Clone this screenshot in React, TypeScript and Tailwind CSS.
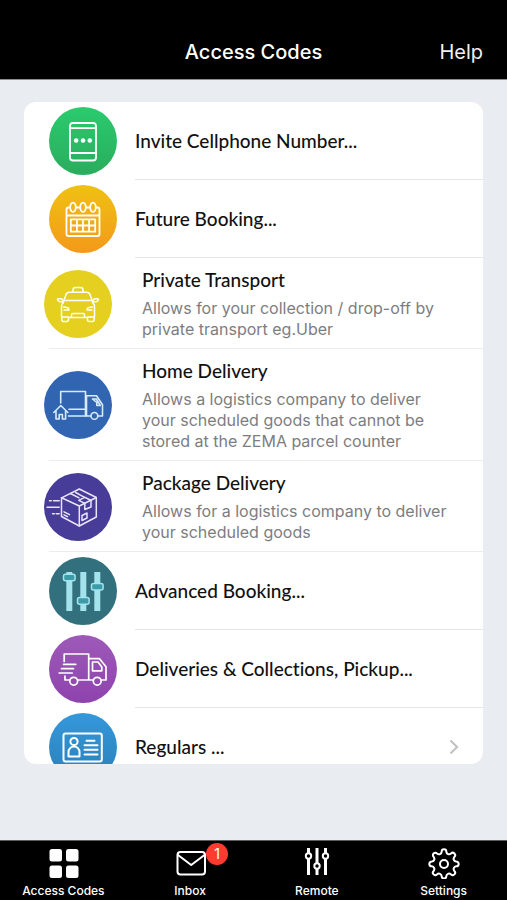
import { ReactNode } from 'react'

//icons
const PhoneIcon = () => (
  <>
    <rect x="21" y="16" width="26" height="37.5" rx="3" />
    <path d="M21 21.2h26M21 46h26" />
    <g fill="#fff" stroke="none">
      <circle cx="27.2" cy="33.5" r="2.3" />
      <circle cx="34" cy="33.5" r="2.3" />
      <circle cx="40.8" cy="33.5" r="2.3" />
    </g>
  </>
)

const CalendarIcon = () => (
  <>
    <path d="M21 22.5h-1.5a2 2 0 0 0-2 2V49a2 2 0 0 0 2 2h29a2 2 0 0 0 2-2V24.5a2 2 0 0 0-2-2H47M27 22.5h4M37 22.5h4M17.5 30.5h33" />
    <ellipse cx="24" cy="22.2" rx="2.8" ry="4.6" />
    <ellipse cx="34" cy="22.2" rx="2.8" ry="4.6" />
    <ellipse cx="44" cy="22.2" rx="2.8" ry="4.6" />
    <path d="M21.8 34.3h24.4v12.4H21.8zM27.9 34.3v12.4M34 34.3v12.4M40.1 34.3v12.4M21.8 40.5h24.4" />
  </>
)

const TaxiIcon = () => (
  <g strokeWidth="1.5">
    <path d="M29 22v-2a2.5 2.5 0 0 1 2.5-2.5h5A2.5 2.5 0 0 1 39 20v2" />
    <path d="M19 33l3-8.5a3.5 3.5 0 0 1 3.3-2.3h17.4a3.5 3.5 0 0 1 3.3 2.3L49 33M21.5 30.5h25" />
    <path d="M19.8 31.5l-2.3-2.8h-3a1 1 0 0 0-.6 1.8l1.6 1.2h3.3M48.2 31.5l2.3-2.8h3a1 1 0 0 1 .6 1.800l-1.600 1.200h-3.300" />
    <path d="M19 33a4 4 0 0 0-1.5 3.200V47h7M49 33a4 4 0 0 1 1.500 3.200V47h-7" />
    <path d="M19.500 37l3.500.6a2.500 2.500 0 0 1 2 2.400h-5M48.500 37l-3.500.6a2.500 2.500 0 0 0-2 2.400h5" />
    <path d="M17.800 47v3a1.500 1.500 0 0 0 1.500 1.500H23a1.500 1.500 0 0 0 1.500-1.500v-2.500h19V50a1.500 1.500 0 0 0 1.500 1.500h3.700a1.500 1.500 0 0 0 1.500-1.500v-3M27.500 47v-2.500a1 1 0 0 1 1-1h11a1 1 0 0 1 1 1V47" />
  </g>
)

const HomeTruckIcon = () => (
  <g strokeWidth="1.6" stroke="#d6ebff">
    <path d="M16.7 32V20.5h24.8v24.7M25 38.3h16M24.5 45h17" />
    <path d="M9.8 41.5l7-7 7 7M12 40v8h3.2v-4.5h3.2V48h3.2v-8" />
    <path d="M46.5 45h-4V24.8h10l6 9V45h-4.5" />
    <path d="M48.5 28h3.8l4 6.5h-3.5M48.5 28l4.3 3.5v3" />
    <circle cx="50.4" cy="44.9" r="3.4" />
  </g>
)

const PackageIcon = () => (
  <g strokeWidth="1.5" stroke="#e7e4fb">
    <path d="M35.3 16l17 8.5V44l-17 9-17.8-9.5V24.8z" />
    <path d="M17.5 24.8L35.3 33l17-8.5M35.3 33v20" />
    <path d="M26.5 20.5l8.5 4.3M40.8 30.3l-6-3 5.800-3 6.700 3.200M40.800 30.300v6.200L47 34v-6.500M40.600 24.300l-9-4.800" />
    <path d="M20 38.8l5.5 2.900M20 41.800l3.500 1.800M38 42.500l5-2.500v5l-5 2.500z" />
    <path d="M5.500 27.700h1.800M9.500 27.700h5.700M3 34.300h12.200M8.500 40.700h1.800M12.200 40.700h3" />
  </g>
)

const SlidersIcon = () => (
  <>
    <g fill="#a4e3ec" stroke="none">
      <path d="M17.3 15h6v39h-6zM31.3 15h6v39h-6zM45.3 15h6v39h-6z" />
    </g>
    <g fill="#3c9ba8" stroke="#a4e3ec" strokeWidth="1.5">
      <rect x="14.5" y="17.2" width="11.6" height="6.6" rx="2" />
      <rect x="28.5" y="40.6" width="11.6" height="6.6" rx="2" />
      <rect x="42.5" y="26.5" width="11.6" height="6.6" rx="2" />
    </g>
  </>
)

const TruckIcon = () => (
  <g strokeWidth="1.7">
    <path d="M15.2 26.5V19h24.500v26M14.500 29.300h12.300M12.500 33.700h12M10.200 38h13M16 41v4h4.300M29 45h14.500" />
    <path d="M40 23.7h10.5l6.5 8V45h-4.5" />
    <path d="M43.5 27H49l3.800 5v3.800h-9.300z" />
    <circle cx="24.7" cy="46.2" r="3.9" />
    <circle cx="48.2" cy="46.2" r="3.9" />
  </g>
)

const CardIcon = () => (
  <g strokeWidth="2">
    <rect x="14.5" y="20.5" width="38.3" height="28" rx="2" />
    <circle cx="25" cy="28.5" r="3.6" />
    <path d="M19.5 43.5V39a5.5 5.5 0 0 1 11 0v4.5z" />
    <path d="M37.5 27.7h8M35.5 32.2h13M35.5 36.8h13M35.5 41.5h13" />
  </g>
)

interface Booking {
  title: string
  text?: string
  color: string
  icon: ReactNode
  arrow?: boolean
}

const bookings: Booking[] = [
  {
    title: 'Invite Cellphone Number...',
    color: 'bg-linear-to-b from-[#2bcb6e] to-[#2aac5d]',
    icon: <PhoneIcon />,
  },
  {
    title: 'Future Booking...',
    color: 'bg-linear-to-b from-[#efc112] to-[#f3991a]',
    icon: <CalendarIcon />,
  },
  {
    title: 'Private Transport',
    text: 'Allows for your collection / drop-off by private transport eg.Uber',
    color: 'bg-[#e5cf1f]',
    icon: <TaxiIcon />,
  },
  {
    title: 'Home Delivery',
    text: 'Allows a logistics company to deliver your scheduled goods that cannot be stored at the ZEMA parcel counter',
    color: 'bg-[#3165b2]',
    icon: <HomeTruckIcon />,
  },
  {
    title: 'Package Delivery',
    text: 'Allows for a logistics company to deliver your scheduled goods',
    color: 'bg-[#473c97]',
    icon: <PackageIcon />,
  },
  {
    title: 'Advanced Booking...',
    color: 'bg-[#33707e]',
    icon: <SlidersIcon />,
  },
  {
    title: 'Deliveries & Collections, Pickup...',
    color: 'bg-linear-to-b from-[#9d59b8] to-[#8e43ad]',
    icon: <TruckIcon />,
  },
  {
    title: 'Regulars ...',
    color: 'bg-linear-to-b from-[#3498db] to-[#2a80b9]',
    icon: <CardIcon />,
    arrow: true,
  },
]

const tabs = [
  {
    name: 'Access Codes',
    icon: (
      <g fill="#fff" stroke="none">
        <rect x="2.5" y="2" width="12.5" height="12.5" rx="2.5" />
        <rect x="19" y="2" width="12.5" height="12.5" rx="2.5" />
        <rect x="2.5" y="18.5" width="12.5" height="12.5" rx="2.5" />
        <rect x="19" y="18.5" width="12.5" height="12.5" rx="2.5" />
      </g>
    ),
  },
  {
    name: 'Inbox',
    badge: 1,
    icon: (
      <>
        <rect x="3.5" y="5" width="27.5" height="22.5" rx="3" />
        <path d="M4 8l13.2 10L30.500 8" />
      </>
    ),
  },
  {
    name: 'Remote',
    icon: (
      <>
        <path strokeWidth="3" strokeLinecap="butt" d="M7.500 1v5M7.500 12v16M16 1v15M16 22v6M24.500 1v5M24.500 12v16" />
        <circle cx="7.5" cy="9" r="2.7" />
        <circle cx="16" cy="19" r="2.7" />
        <circle cx="24.5" cy="9" r="2.7" />
      </>
    ),
  },
  {
    name: 'Settings',
    icon: (
      <>
        <path d="M13.7 4.600a2.300 2.300 0 0 1 4.600 0c.2 2.500 2.800 3.600 4.700 1.900a2.350 2.350 0 0 1 3.400 3.400c-1.600 1.900-.6 4.500 1.900 4.700a2.300 2.300 0 0 1 0 4.700c-2.500.2-3.500 2.800-1.900 4.700a2.350 2.350 0 0 1-3.400 3.400c-1.900-1.600-4.500-.6-4.700 1.900a2.300 2.300 0 0 1-4.600 0c-.2-2.500-2.800-3.500-4.700-1.900a2.350 2.350 0 0 1-3.400-3.400c1.600-1.900.6-4.500-1.900-4.700a2.300 2.300 0 0 1 0-4.700c2.500-.2 3.500-2.800 1.900-4.700a2.350 2.350 0 0 1 3.400-3.400c1.900 1.700 4.500.6 4.700-1.900z" />
        <circle cx="16" cy="17" r="4" />
      </>
    ),
  },
]

const BookingIcon = ({ color, children }: { color: string; children: ReactNode }) => (
  <span className={`size-[68px] shrink-0 rounded-full ${color}`}>
    <svg
      viewBox="0 0 68 68"
      className="size-full"
      fill="none"
      stroke="#fff"
      strokeWidth="1.8"
      strokeLinecap="round"
      strokeLinejoin="round"
      aria-hidden="true"
    >
      {children}
    </svg>
  </span>
)

const BookingTitle = ({ children }: { children: string }) => (
  <span className="block text-[19px]/6 font-medium text-[#111] font-['Lato',sans-serif] [font-variant-ligatures:none]">
    {children}
  </span>
)

const BookingRow = ({ title, text, color, icon, arrow }: Booking) => {
  if (text) {
    return (
      <li>
        <button className="flex w-full items-center pl-5 text-left">
          <BookingIcon color={color}>{icon}</BookingIcon>
          <span className="-ml-[63px] flex-1 border-b border-[#ececee] pt-2.5 pr-8 pb-2 pl-[93px]">
            <BookingTitle>{title}</BookingTitle>
            <span className="mt-1.5 block text-base/[21px] text-[#7d7d7f]">{text}</span>
          </span>
        </button>
      </li>
    )
  }

  return (
    <li>
      <button className="flex w-full items-center gap-[18px] pl-[25px] text-left">
        <BookingIcon color={color}>{icon}</BookingIcon>
        <span className="flex h-[78px] flex-1 items-center justify-between border-b border-[#e6e6e8] pr-6">
          <BookingTitle>{title}</BookingTitle>
          {arrow && (
            <svg viewBox="0 0 10 16" className="h-4 w-2.5" fill="none" stroke="#c3c3c7" strokeWidth="2.2" aria-hidden="true">
              <path d="M1.5 1.5L8 8l-6.5 6.5" />
            </svg>
          )}
        </span>
      </button>
    </li>
  )
}

const App = () => {
  return (
    <div className="flex h-screen flex-col bg-[#e9edf1] font-['Inter',sans-serif]">
      <header className="grid grid-cols-[1fr_auto_1fr] items-center border-b border-[#8c8c8e] bg-black px-6 pt-9 pb-[11px] text-white">
        <h1 className="col-start-2 text-xl/8 font-medium">Access Codes</h1>
        <button className="justify-self-end text-xl/8 text-[#f0f0f0]">Help</button>
      </header>

      <main className="flex min-h-0 flex-1 flex-col px-6 pt-[22px] pb-[76px]">
        <ul className="min-h-0 flex-1 overflow-y-auto rounded-xl bg-white [scrollbar-width:none]">
          {bookings.map((booking) => (
            <BookingRow key={booking.title} {...booking} />
          ))}
        </ul>
      </main>

      <nav className="grid grid-cols-4 border-t border-[#5c5c5e] bg-black pt-1.5 pb-px text-white">
        {tabs.map(({ name, icon, badge }) => (
          <a key={name} href="#" className="flex flex-col items-center gap-1">
            <span className="relative">
              <svg
                viewBox="0 0 32 32"
                className="size-8"
                fill="none"
                stroke="#fff"
                strokeWidth="2"
                strokeLinecap="round"
                strokeLinejoin="round"
                aria-hidden="true"
              >
                {icon}
              </svg>
              {badge && (
                <span className="absolute -top-1 left-8 flex size-[22px] items-center justify-center rounded-full bg-[#ff3b30] text-sm">
                  {badge}
                </span>
              )}
            </span>
            <span className="text-xs/4 font-medium">{name}</span>
          </a>
        ))}
      </nav>
    </div>
  )
}

export default App
